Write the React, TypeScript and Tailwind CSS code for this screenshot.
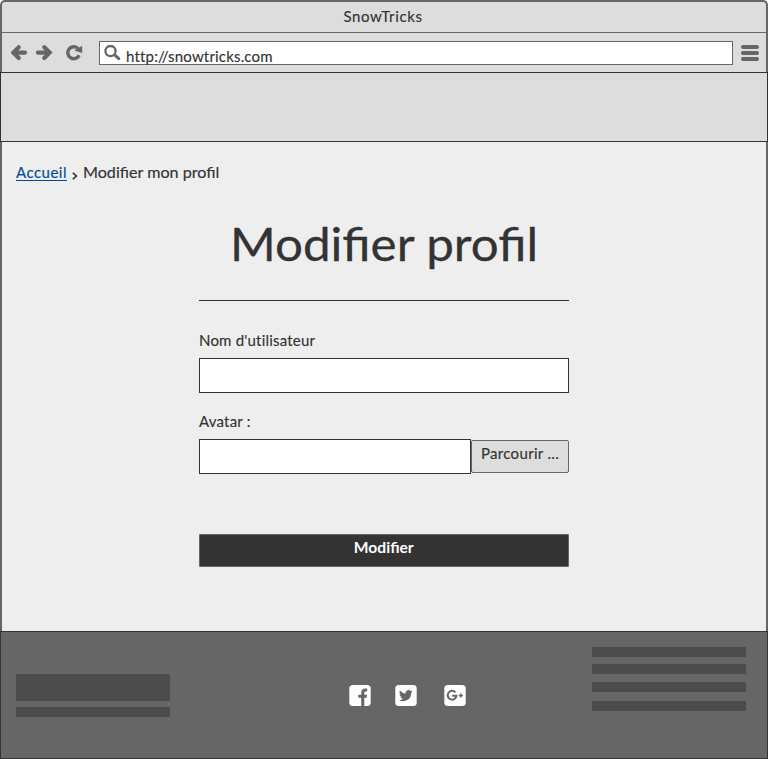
import type { ReactNode } from "react";

function BackIcon() {
  return (
    <svg width="17" height="16" viewBox="0 0 17 16" fill="none" stroke="#666" strokeWidth="4.1" strokeLinecap="round" strokeLinejoin="miter">
      <path d="M14 7.600H4" />
      <path d="M7.700 2.200 2.300 7.600l5.400 5.400" />
    </svg>
  );
}

function ForwardIcon() {
  return (
    <svg width="17" height="16" viewBox="0 0 17 16" fill="none" stroke="#666" strokeWidth="4.1" strokeLinecap="round" strokeLinejoin="miter">
      <path d="M2 7.600H12" />
      <path d="m8.300 2.200 5.400 5.400-5.400 5.400" />
    </svg>
  );
}

function ReloadIcon() {
  return (
    <svg width="17" height="16" viewBox="0 0 17 16" fill="none">
      <path d="M12 3.400A6 6 0 1 0 13.200 10.300" stroke="#666" strokeWidth="3.400" />
      <path d="M16.200 .700V8L8.300 5.600Z" fill="#666" />
    </svg>
  );
}

function SearchIcon() {
  return (
    <svg width="17" height="16" viewBox="0 0 17 16" fill="none" stroke="#666">
      <circle cx="6.500" cy="6.100" r="5.100" strokeWidth="2.300" />
      <path d="m10.600 9.900 4.200 3.700" strokeWidth="3" strokeLinecap="round" />
    </svg>
  );
}

function SocialTile({ children }: { children: ReactNode }) {
  return (
    <svg width="22" height="21" viewBox="0 0 22 21">
      <rect x=".3" width="21.400" height="21" rx="3.500" fill="#fff" />
      {children}
    </svg>
  );
}

function Bar({ className }: { className: string }) {
  return <div className={`w-[154px] bg-[#4c4c4c] ${className}`} />;
}

export default function App() {
  return (
    <div className="flex h-[759px] w-[768px] flex-col bg-[#eee] font-['Lato',sans-serif] text-[15px] leading-5 text-[#333] [-webkit-text-stroke:0.15px_currentColor]">
      <div className="h-[72px] bg-white">
        <header className="flex h-[72px] flex-col rounded-t-[5px] border-x-2 border-t-2 border-[#666] bg-[#ddd]">
          <div className="h-[31px] border-b border-[#666] pt-1 text-center">
            <span className="inline-block pr-[2px] tracking-[0.65px]">SnowTricks</span>
          </div>
          <div className="flex h-[39px] items-start pt-2 pl-[9px]">
            <div className="flex gap-2 pt-1">
              <BackIcon />
              <ForwardIcon />
            </div>
            <div className="ml-[13px] pt-1">
              <ReloadIcon />
            </div>
            <div className="ml-4 flex h-6 w-[634px] border border-[#666] bg-white pt-[3px] pl-1">
              <SearchIcon />
              <span className="ml-[5px] pt-px tracking-[0.18px]">http://snowtricks.com</span>
            </div>
            <div className="ml-2 flex flex-col gap-[2px] pt-1">
              <i className="h-1 w-[18px] rounded-full bg-[#666]" />
              <i className="h-1 w-[18px] rounded-full bg-[#666]" />
              <i className="h-1 w-[18px] rounded-full bg-[#666]" />
            </div>
          </div>
        </header>
      </div>

      <div className="h-[70px] border border-[#333] bg-[#ddd]" />

      <main className="h-[489px] border-x-2 border-[#666]">
        <nav className="flex pt-5 pl-[14px]">
          <a href="#" className="tracking-[0.48px] text-[#004b99] underline underline-offset-2">Accueil</a>
          <svg className="mt-[10px] ml-[5px]" width="6" height="8" viewBox="0 0 6 8" fill="none" stroke="#333" strokeWidth="1.600">
            <path d="m.8 .8 3.700 3.200L.8 7.200" />
          </svg>
          <span className="ml-[5px] origin-left scale-x-[1.075]">Modifier mon profil</span>
        </nav>
        <form className="mx-auto w-[370px]">
          <h1 className="mt-8 h-[86px] origin-center scale-x-[1.072] text-center text-[46px] leading-[60px] whitespace-nowrap [-webkit-text-stroke:0.3px_currentColor]">Modifier profil</h1>
          <hr className="border-[#333]" />
          <label className="mt-[29px] block h-7 tracking-[0.2px]" htmlFor="name">Nom d'utilisateur</label>
          <input id="name" className="block h-[35px] w-full border border-[#333] bg-white" />
          <label className="mt-[18px] block h-7 tracking-[0.2px]" htmlFor="avatar">Avatar :</label>
          <div className="flex items-center">
            <input id="avatar" className="h-[35px] w-[272px] border border-[#333] bg-white" />
            <button type="button" className="flex h-[33px] w-[98px] justify-center rounded-[2px] border border-[#666] bg-[#ddd] pt-[2px] tracking-[0.32px]">Parcourir ...</button>
          </div>
          <button type="button" className="mt-[60px] flex h-[33px] w-full justify-center rounded-[1px] border border-[#666] bg-[#333] pt-[2px] font-bold text-white">
            <span className="scale-x-[1.04] [-webkit-text-stroke:0px]">Modifier</span>
          </button>
        </form>
      </main>

      <footer className="flex h-32 border border-[#333] bg-[#666] pl-[15px]">
        <div className="flex flex-col gap-[6px] pt-[42px]">
          <Bar className="h-[27px]" />
          <Bar className="h-[10px]" />
        </div>
        <div className="ml-[179px] flex pt-[53px]">
          <SocialTile>
            <path d="M12.200 21v-8.200H9.300V9.700h2.900V7.600c0-2.800 1.700-4.200 4.200-4.200h1.800v3h-1.500c-1.100 0-1.400.6-1.400 1.500v1.800h2.800l-.4 3.100h-2.400V21Z" fill="#666" />
          </SocialTile>
          <div className="ml-6">
            <SocialTile>
              <path transform="translate(4.200 3.800) scale(.57)" d="M23.600 4.600a9.700 9.700 0 0 1-2.800.8 4.900 4.900 0 0 0 2.100-2.700c-1 .6-2 1-3.100 1.200a4.900 4.900 0 0 0-8.400 4.500A13.900 13.900 0 0 1 1.300 3.200a4.900 4.900 0 0 0 1.500 6.500c-.8 0-1.600-.2-2.200-.6 0 2.300 1.600 4.400 3.900 4.900-.7.200-1.500.2-2.200.1.600 2 2.400 3.400 4.600 3.400A9.900 9.900 0 0 1-.4 19.500 14 14 0 0 0 21.100 7.100c1-.7 1.800-1.600 2.500-2.500Z" fill="#666" />
            </SocialTile>
          </div>
          <div className="ml-[27px]">
            <SocialTile>
              <path d="M11.400 7.300A4.400 4.400 0 1 0 12.500 10.700H8.200" fill="none" stroke="#666" strokeWidth="2" />
              <path d="M16.900 8.400v4.200M14.800 10.500H19" stroke="#666" strokeWidth="1.500" />
            </SocialTile>
          </div>
        </div>
        <div className="ml-[126px] pt-[15px]">
          <Bar className="h-[10px]" />
          <Bar className="mt-[7px] h-[10px]" />
          <Bar className="mt-2 h-[10px]" />
          <Bar className="mt-[9px] h-[10px]" />
        </div>
      </footer>
    </div>
  );
}
